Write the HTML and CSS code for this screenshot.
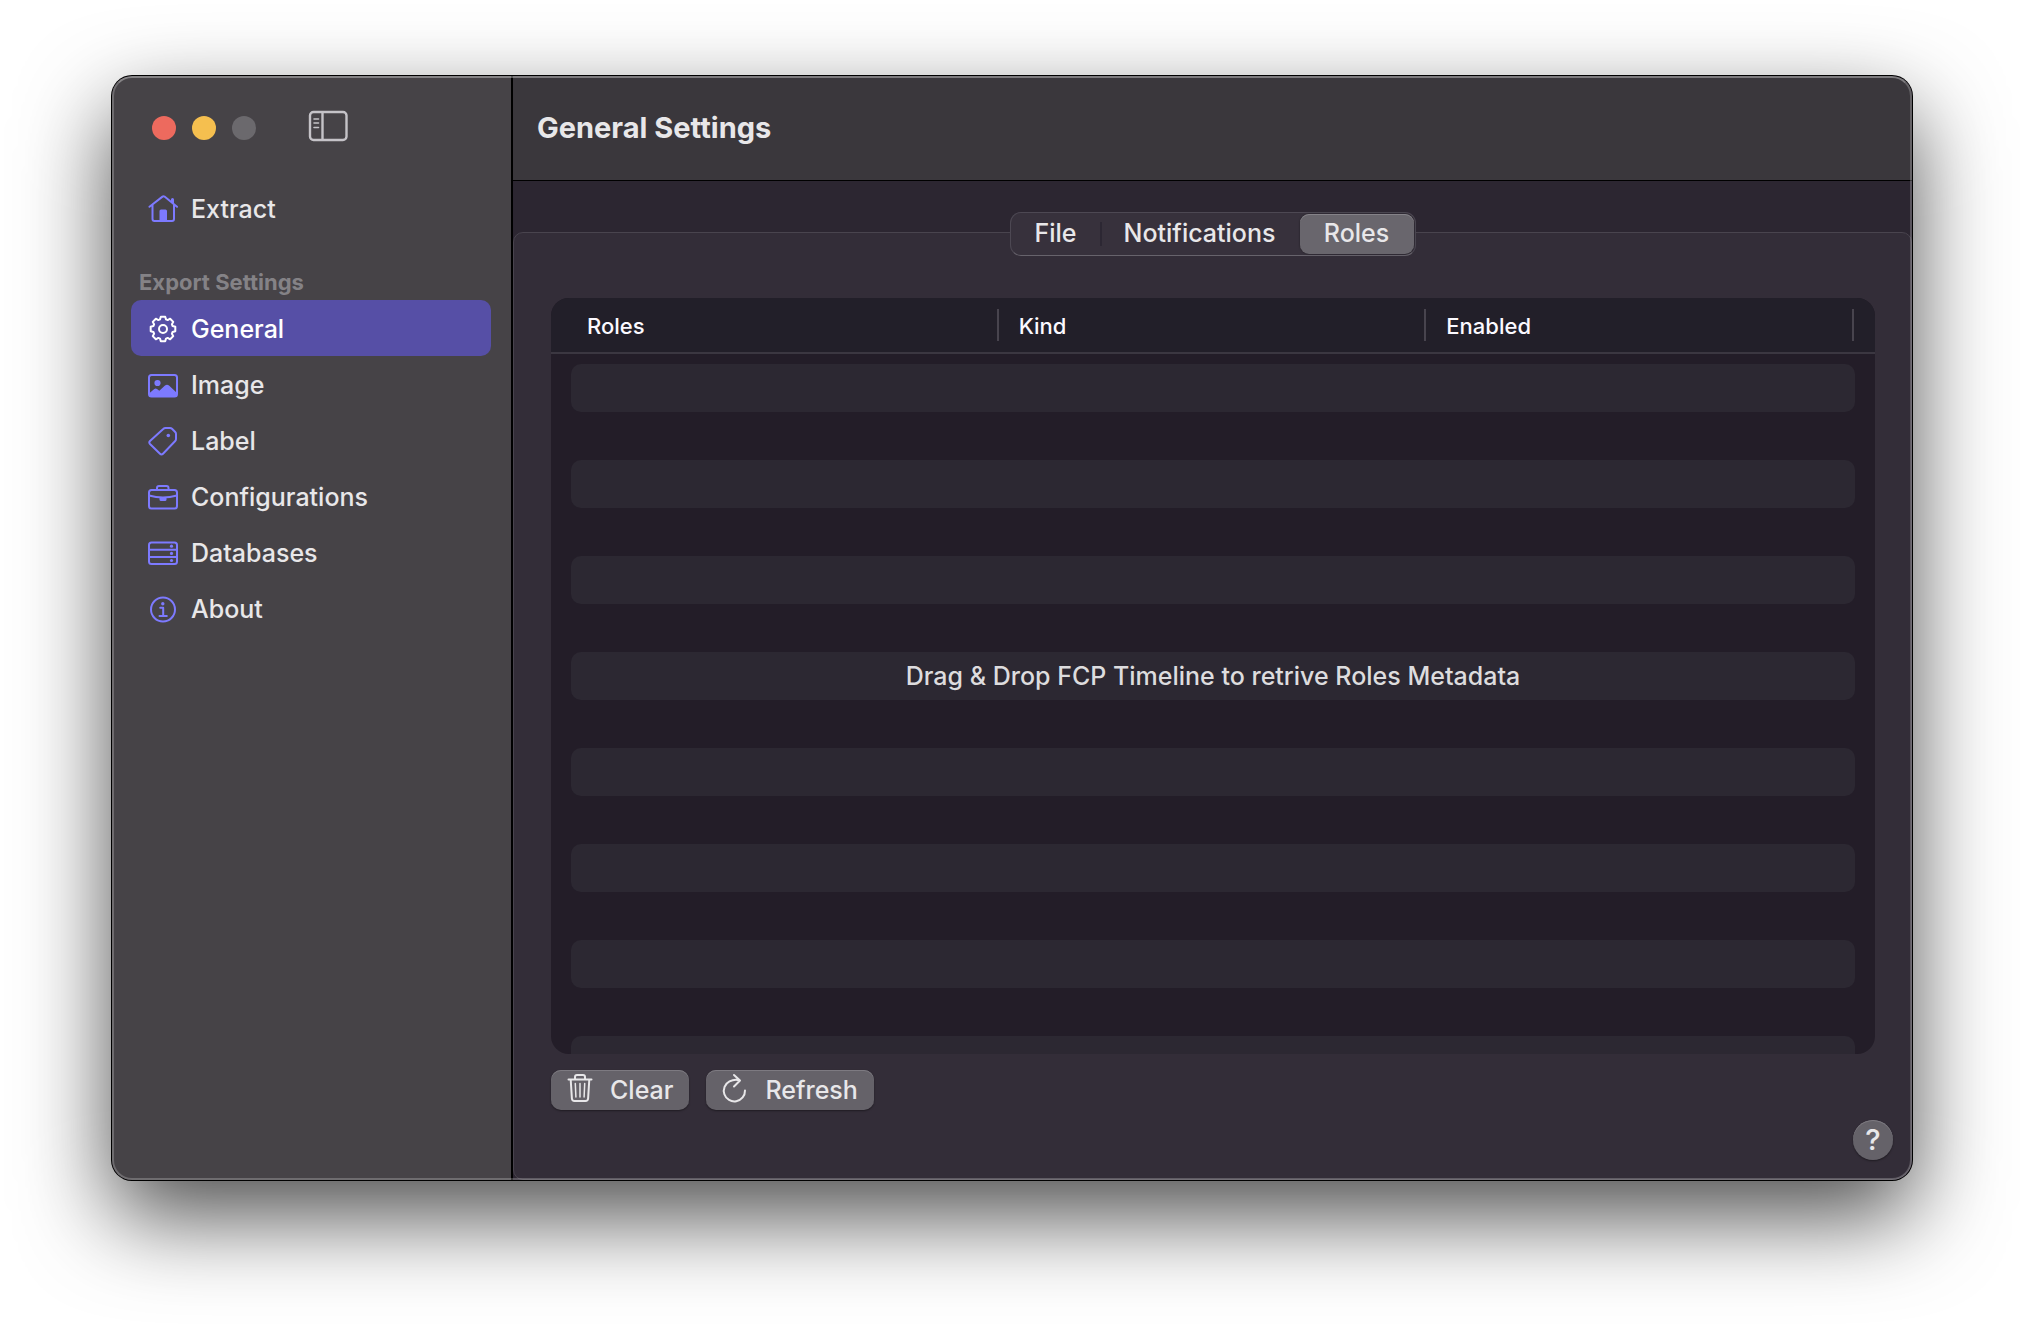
FILE: index.html
```html
<!DOCTYPE html>
<html lang="en">
<head>
<meta charset="utf-8">
<title>General Settings</title>
<link rel="stylesheet" href="styles.css">
</head>
<body>
<div class="window">
  <aside class="sidebar">
    <div class="window-controls">
      <button class="dot dot-close" type="button" aria-label="Close"></button>
      <button class="dot dot-minimize" type="button" aria-label="Minimize"></button>
      <button class="dot dot-zoom" type="button" aria-label="Zoom" disabled></button>
      <button class="sidebar-toggle" type="button" aria-label="Toggle sidebar">
        <svg width="40" height="32" viewBox="0 0 40 32" fill="none" stroke="currentColor">
          <rect x="2" y="2" width="36.500" height="28" rx="3.500" stroke-width="2.400"/>
          <path d="M14.500 2v28" stroke-width="2.400"/>
          <path d="M6 9h4.500M6 13h4.500M6 17.500h4.500" stroke-width="1.600" stroke-linecap="round"/>
        </svg>
      </button>
    </div>
    <nav class="nav">
      <a class="nav-item" href="#extract">
        <svg class="icon" viewBox="0 0 30 30">
          <path d="M1.500 12.800 14.500 2.600q1-.7 2 0L29 12.800M4.500 11v14q0 2 2 2h17.500q2 0 2-2V11"/>
          <path class="solid" d="M11.500 27v-10q0-1.500 1.500-1.500h4.500q1.500 0 1.500 1.500v10zM23 8V5.500q0-1.500 1.500-1.500t1.500 1.500V10z"/>
        </svg>
        Extract
      </a>
      <h2 class="nav-heading">Export Settings</h2>
      <a class="nav-item nav-item-current" href="#general" aria-current="page">
        <svg class="icon" viewBox="-15 -15 30 30">
          <path d="M-2.200-12.300H2.200L3-9.600 4.670-8.910 7.140-10.260 10.260-7.140 8.910-4.670 9.600-3 12.300-2.200V2.200L9.600 3 8.910 4.670 10.260 7.140 7.140 10.260 4.670 8.910 3 9.600 2.200 12.300H-2.200L-3 9.600-4.670 8.910-7.140 10.260-10.260 7.140-8.910 4.670-9.600 3-12.300 2.200V-2.200L-9.600-3-8.910-4.670-10.260-7.140-7.140-10.260-4.670-8.910-3-9.600z"/>
          <circle r="4"/>
        </svg>
        General
      </a>
      <a class="nav-item" href="#image">
        <svg class="icon" viewBox="0 0 30 30">
          <rect x="1" y="5" width="28" height="21.500" rx="2.500"/>
          <circle class="solid" cx="9.500" cy="13" r="3.100"/>
          <path class="solid" d="M1 23.500 6.300 19q1.400-1 2.700 0l2.300 1.800 5.700-5.200q2-1.600 4 0L29 23v3.500H1z"/>
        </svg>
        Image
      </a>
      <a class="nav-item" href="#label">
        <svg class="icon" viewBox="0 0 30 30">
          <path d="M15.500 2.800Q16.300 2 17.500 2H22q1.200 0 2 .8L27.200 6q.8.8.8 2v5q0 1.200-.8 2L15 27.700q-1.500 1.500-3 0L2 18q-1.400-1.500 0-3z"/>
          <circle class="solid" cx="20.300" cy="9.500" r="1.800"/>
        </svg>
        Label
      </a>
      <a class="nav-item" href="#configurations">
        <svg class="icon" viewBox="0 0 30 30">
          <rect x="1" y="8" width="28" height="18.500" rx="2.500"/>
          <path d="M9 8V6q0-2 2-2h7.500q2 0 2 2v2M1 13.500Q15 17.500 29 13.500"/>
          <path class="solid" d="M11.500 15h7v2.500q0 1.500-1.500 1.500h-4q-1.500 0-1.500-1.500z"/>
        </svg>
        Configurations
      </a>
      <a class="nav-item" href="#databases">
        <svg class="icon" viewBox="0 0 30 30">
          <rect x="1" y="4.500" width="28" height="21.500" rx="2.500"/>
          <path d="M1 11.700h28M1 19h28"/>
          <g class="solid"><circle cx="23.500" cy="8.200" r="1.600"/><circle cx="23.500" cy="15.400" r="1.600"/><circle cx="23.500" cy="22.500" r="1.600"/></g>
        </svg>
        Databases
      </a>
      <a class="nav-item" href="#about">
        <svg class="icon" viewBox="0 0 30 30">
          <circle cx="15" cy="15.500" r="12"/>
          <circle class="solid" cx="14.800" cy="9.800" r="1.700"/>
          <path d="M12.200 13.800h3v8M11.500 22h7.300"/>
        </svg>
        About
      </a>
    </nav>
  </aside>

  <main class="main">
    <header class="titlebar"><h1 class="title">General Settings</h1></header>
    <div class="content">
      <div class="tabs" role="tablist">
        <button class="tab" type="button" role="tab" aria-selected="false">File</button>
        <button class="tab tab-divided" type="button" role="tab" aria-selected="false">Notifications</button>
        <button class="tab tab-selected" type="button" role="tab" aria-selected="true">Roles</button>
      </div>
      <section class="panel">
        <div class="table-box">
          <table class="roles">
            <thead><tr><th scope="col">Roles</th><th scope="col">Kind</th><th scope="col">Enabled</th></tr></thead>
            <tbody>
              <tr><td></td></tr>
              <tr><td></td></tr>
              <tr><td></td></tr>
              <tr><td class="message" colspan="3">Drag &amp; Drop FCP Timeline to retrive Roles Metadata</td></tr>
              <tr><td></td></tr>
              <tr><td></td></tr>
              <tr><td></td></tr>
              <tr><td></td></tr>
            </tbody>
          </table>
        </div>
        <div class="actions">
          <button class="button" type="button">
            <svg class="button-icon" viewBox="0 0 26 30">
              <path d="M1.500 6.500h23M8 6.500V4q0-2 2-2h6q2 0 2 2v2.500M3.700 6.500l1.200 19q.2 2.500 2.600 2.500h11q2.400 0 2.600-2.500l1.200-19"/>
              <path class="thin" d="M8.300 10.500l.6 13.500M13 10.500v13.500M17.700 10.500l-.6 13.500"/>
            </svg>
            Clear
          </button>
          <button class="button" type="button">
            <svg class="button-icon" viewBox="0 0 26 30">
              <path d="M17.500 7.200C15 6.400 11 6.500 7.500 8.400A10.600 10.600 0 1 0 23 17.500M12 2l6 5.500-6 6"/>
            </svg>
            Refresh
          </button>
        </div>
        <button class="help" type="button" aria-label="Help">?</button>
      </section>
    </div>
  </main>
</div>
</body>
</html>
```
FILE: styles.css
```css
* {
  box-sizing: border-box;
}

body {
  margin: 0;
  min-height: 100vh;
  padding: 76px 112px 148px;
  display: flex;
  background: #fff;
  color: #e8e7e9;
  font-family: Inter, "Liberation Sans", sans-serif;
  font-size: 25px;
  font-weight: 500;
  line-height: 32px;
}

button {
  margin: 0;
  padding: 0;
  border: 0;
  background: none;
  color: inherit;
  font: inherit;
}

svg {
  display: block;
  flex: none;
}

.window {
  position: relative;
  flex: 1;
  display: flex;
  border-radius: 20px;
  background: #322c37;
  box-shadow: 0 0 0 1px #000, 0 36px 90px rgba(0, 0, 0, 0.7);
  overflow: hidden;
}

/* light rim drawn over the window's edge */
.window::after {
  content: "";
  position: absolute;
  inset: 0;
  border: 2px solid rgba(255, 255, 255, 0.22);
  border-top-color: rgba(255, 255, 255, 0.34);
  border-radius: 20px;
  pointer-events: none;
}

.sidebar {
  flex: none;
  width: 401px;
  border-right: 2px solid #000;
  background: #464347;
}

.window-controls {
  display: flex;
  align-items: center;
  gap: 16px;
  height: 104px;
  padding-left: 40px;
}

.dot {
  width: 24px;
  height: 24px;
  border-radius: 50%;
}

.dot-close { background: #ed6a5e; }
.dot-minimize { background: #f5bf4f; }
.dot-zoom { background: #6b696d; }

.sidebar-toggle {
  margin-left: 36px;
  padding-bottom: 4px;
  color: #c5c3c8;
}

.nav {
  padding: 0 20px 0 19px;
}

.nav-item {
  display: flex;
  align-items: center;
  gap: 13px;
  height: 56px;
  padding: 1px 0 0 17px;
  border-radius: 10px;
  color: #e8e7e9;
  text-decoration: none;
}

.nav-item-current {
  background: #564fa6;
  color: #fff;
}

.icon {
  width: 30px;
  height: 30px;
  fill: none;
  stroke: #7d7aff;
  stroke-width: 2;
  stroke-linecap: round;
  stroke-linejoin: round;
}

.icon .solid {
  fill: #7d7aff;
  stroke: none;
}

.nav-item-current .icon {
  stroke: #fff;
}

.nav-heading {
  margin: 0;
  padding: 30px 0 2px 8px;
  color: #848286;
  font-size: 22px;
  font-weight: 700;
}

.main {
  flex: 1;
  min-width: 0;
  display: flex;
  flex-direction: column;
  background: #2c2631;
}

.titlebar {
  display: flex;
  align-items: center;
  height: 105px;
  padding: 0 24px 1px;
  border-bottom: 1px solid #000;
  background: #3a373c;
}

.title {
  margin: 0;
  font-size: 29px;
  font-weight: 700;
}

.content {
  flex: 1;
  display: flex;
  flex-direction: column;
  padding-top: 31px;
}

.tabs {
  z-index: 1;
  align-self: center;
  display: grid;
  grid-template-columns: 88px 200px 114px;
  padding: 1px;
  height: 44px;
  border: 1px solid #4d4853;
  border-bottom-color: #67636c;
  border-radius: 11px;
  background: #37313c;
}

.tab {
  padding-bottom: 2px;
  border-radius: 9px;
}

.tab-divided {
  background: linear-gradient(#2c2733, #2c2733) 0 50% / 2px 24px no-repeat;
  border-radius: 0;
}

.tab-selected {
  background: #69666d;
  box-shadow: inset 0 1px #858288, 0 0 2px rgba(0, 0, 0, 0.5);
}

.panel {
  flex: 1;
  display: flex;
  flex-direction: column;
  margin-top: -24px;
  padding: 65px 36px 19px 37px;
  border: 1px solid #49444e;
  border-radius: 10px 10px 20px 10px;
  background: #332d38;
}

.table-box {
  flex: 1 1 0;
  min-height: 200px;
  overflow: hidden;
  border-radius: 18px;
  background: #231d28;
}

.roles,
.roles thead,
.roles tbody {
  display: block;
}

.roles thead {
  padding: 0 21px 0 20px;
  border-bottom: 2px solid #3b3741;
  background: #221f29;
}

.roles tr {
  display: flex;
}

.roles th {
  flex: 1 1 30%;
  height: 54px;
  padding: 12px 0 10px 20px;
  background: linear-gradient(#48444e, #48444e) 100% 50% / 2px 32px no-repeat;
  color: #fbf9ff;
  font-size: 22px;
  font-weight: 500;
  text-align: left;
}

.roles th:first-child {
  padding-left: 16px;
}

.roles tbody {
  padding: 10px 20px;
}

.roles tbody tr {
  height: 48px;
  margin-bottom: 48px;
  border-radius: 10px;
  background: #2c2832;
}

.roles td {
  flex: 1;
  padding: 8px 0;
  color: #dddcde;
  text-align: center;
}

.actions {
  display: flex;
  gap: 17px;
  margin-top: 16px;
}

.button {
  display: flex;
  align-items: center;
  gap: 17px;
  height: 40px;
  padding: 0 16px;
  border-radius: 10px;
  background: #656269;
  box-shadow: inset 0 1px #7d7a81, 0 1px 2px rgba(0, 0, 0, 0.4);
}

.button-icon {
  width: 26px;
  height: 30px;
  margin-bottom: 4px;
  fill: none;
  stroke: currentColor;
  stroke-width: 2;
  stroke-linecap: round;
  stroke-linejoin: round;
}

.thin {
  stroke-width: 1.500;
}

.help {
  align-self: flex-end;
  width: 40px;
  height: 40px;
  margin: 10px -18px 0 0;
  border-radius: 50%;
  background: #656269;
  box-shadow: inset 0 1px #7d7a81, 0 1px 2px rgba(0, 0, 0, 0.4);
  font-size: 29px;
}
```
